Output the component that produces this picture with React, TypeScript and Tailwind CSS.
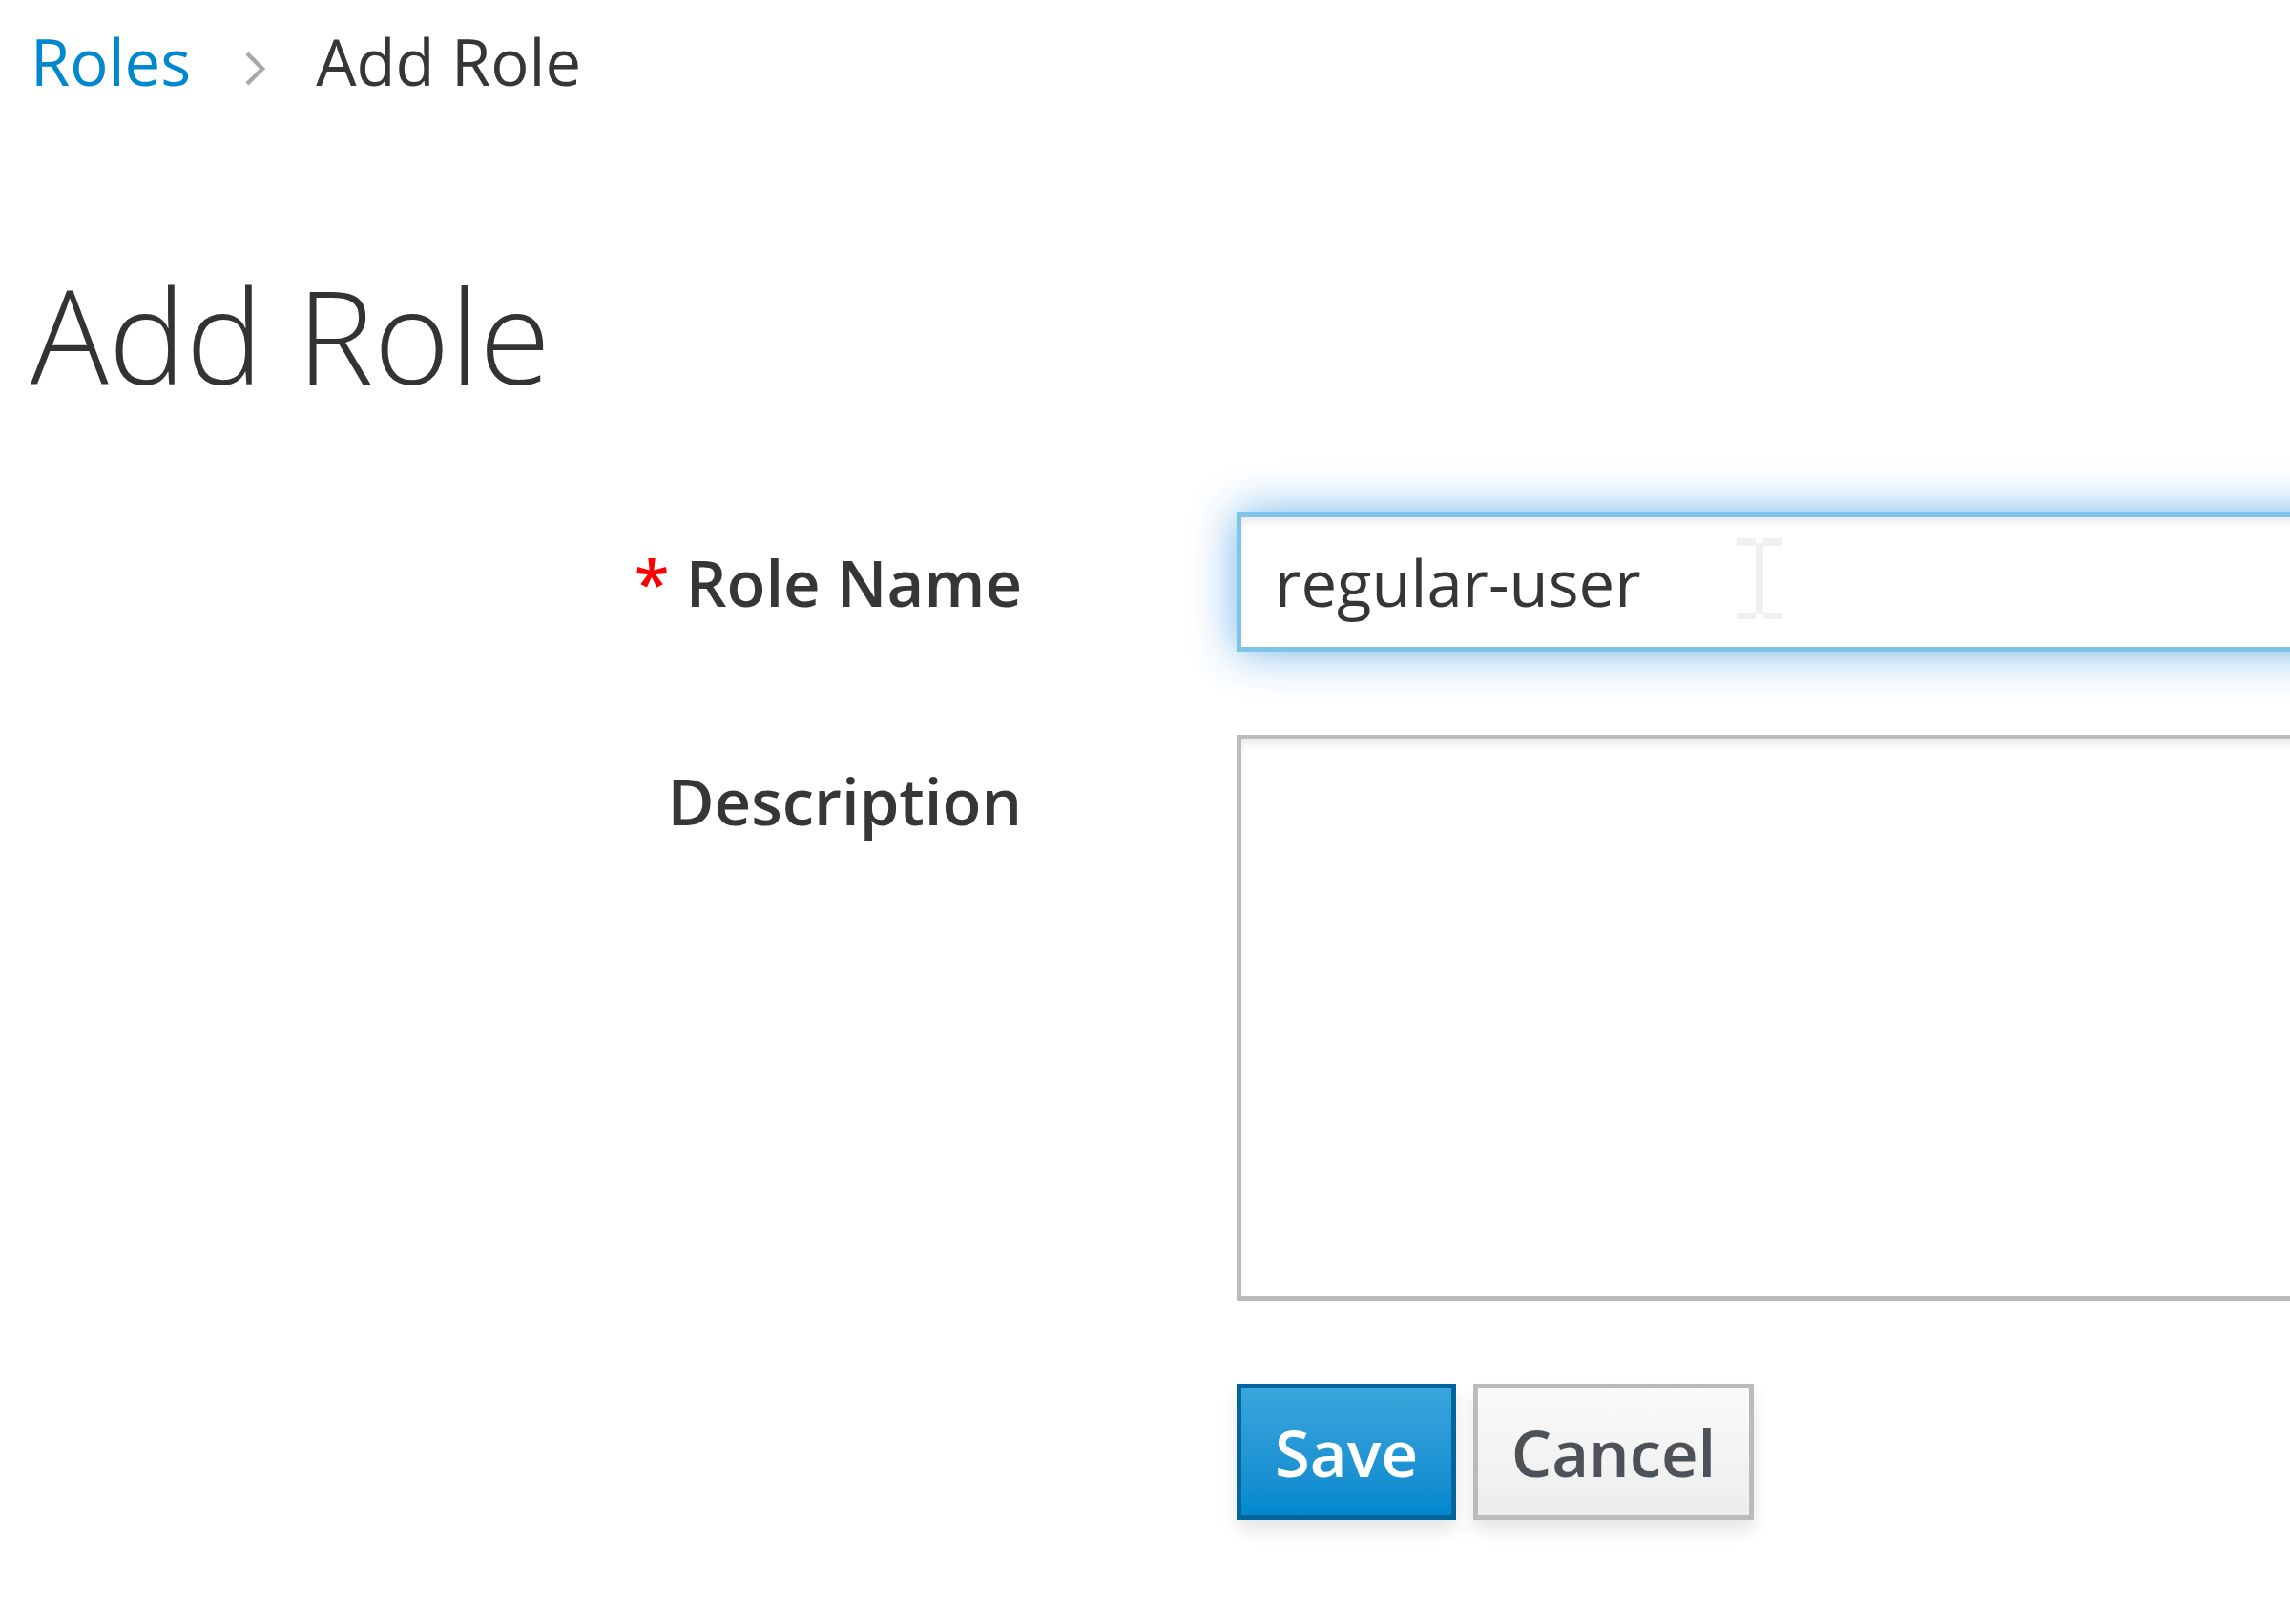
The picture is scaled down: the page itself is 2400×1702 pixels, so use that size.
import React from 'react'

function Chevron() {
    return (
        <svg width="26" height="38" viewBox="0 0 26 38" className="shrink-0">
            <polyline points="4,3 20,19 4,35" fill="none" stroke="#a8a8a8" strokeWidth="4.5" />
        </svg>
    )
}

function TextCursor() {
    return (
        <svg width="48" height="85" viewBox="0 0 48 85" className="absolute left-[524px] top-[27px]">
            <rect x="0" y="0" width="20" height="8" fill="#eff0f0" />
            <rect x="28" y="0" width="20" height="8" fill="#eff0f0" />
            <rect x="20" y="5" width="8" height="75" fill="#eff0f0" />
            <rect x="0" y="78" width="20" height="7" fill="#eff0f0" />
            <rect x="28" y="78" width="20" height="7" fill="#eff0f0" />
        </svg>
    )
}

export default function App() {
    return (
        <div className="w-[2400px] h-[1702px] overflow-hidden bg-white pl-[32px] text-[#363636] font-['Open_Sans',sans-serif]">
            {/* Breadcrumb */}
            <div className="flex items-start pt-[9px] text-[67px] leading-[110px]">
                <a href="#" className="text-[#0088ce]">Roles</a>
                <div className="ml-[55px] mt-[44px]">
                    <Chevron />
                </div>
                <span className="ml-[50px]">Add Role</span>
            </div>

            {/* Title */}
            <h1 className="mt-[158px] text-[136px] font-light leading-[147px] text-[#333]">Add Role</h1>

            {/* Form */}
            <div className="mt-[113px] flex flex-col gap-[87px]">
                <div className="flex">
                    <label className="w-[1039px] shrink-0 pt-[17px] text-right text-[67px] font-semibold leading-[112px]">
                        <span className="text-[#ff0000]">*</span> Role Name
                    </label>
                    <div className="relative ml-[225px] shrink-0">
                        <input
                            defaultValue="regular-user"
                            className="w-[1300px] h-[146px] border-[5px] border-[#7ec3e9] bg-white px-[35px] text-[67px] leading-[112px] text-[#363636] outline-none shadow-[inset_0_6px_6px_rgba(3,3,3,0.075),0_0_48px_rgba(102,175,233,0.95)]"
                        />
                        <TextCursor />
                    </div>
                </div>

                <div className="flex">
                    <label className="w-[1039px] shrink-0 pt-[13px] text-right text-[67px] font-semibold leading-[112px]">
                        Description
                    </label>
                    <textarea className="ml-[225px] w-[1300px] h-[593px] shrink-0 resize-none border-[5px] border-[#bbbbbb] bg-white shadow-[inset_0_6px_6px_rgba(3,3,3,0.075)] outline-none" />
                </div>

                <div className="flex">
                    <div className="w-[1039px] shrink-0" />
                    <div className="ml-[225px] flex gap-[18px]">
                        <button className="w-[230px] h-[143px] border-[5px] border-[#00659c] bg-gradient-to-b from-[#39a5dc] to-[#0088ce] text-[67px] font-semibold leading-[112px] text-white shadow-[0_11px_17px_rgba(3,3,3,0.1)]">
                            Save
                        </button>
                        <button className="w-[294px] h-[143px] border-[5px] border-[#bbbbbb] bg-gradient-to-b from-[#fafafa] to-[#ededed] text-[67px] font-semibold leading-[112px] text-[#4d5258] shadow-[0_11px_17px_rgba(3,3,3,0.1)]">
                            Cancel
                        </button>
                    </div>
                </div>
            </div>
        </div>
    )
}
